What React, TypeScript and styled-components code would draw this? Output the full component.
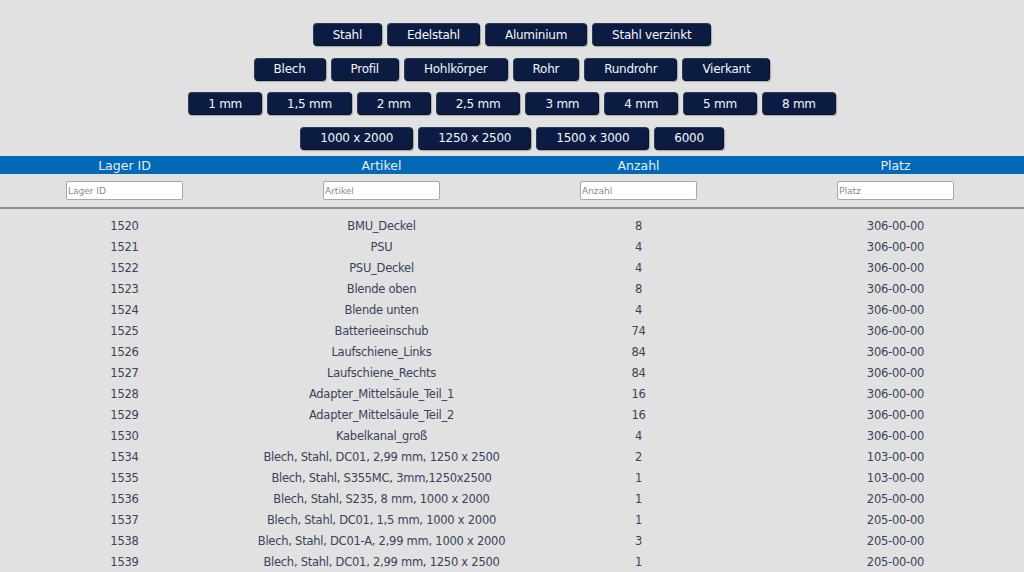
import React from "react";
import styled, { createGlobalStyle } from "styled-components";

const Global = createGlobalStyle`
  html, body { margin: 0; padding: 0; background: #e1e1e1; }
  body { font-family: "DejaVu Sans", Verdana, sans-serif; font-size: 12px; color: #38435e; }
`;

const Page = styled.div`
  padding-top: 23px;
`;

const Filters = styled.div`
  display: flex;
  flex-direction: column;
  align-items: center;
  gap: 11.5px;
`;

const ButtonRow = styled.div`
  display: flex;
  justify-content: center;
  gap: 5px;
`;

const FilterButton = styled.button`
  height: 23px;
  padding: 0 19px;
  border: 1px solid #2b3a5a;
  border-bottom-color: #0a1229;
  border-right-color: #0a1229;
  border-radius: 4px;
  background: #0c1b41;
  color: #f4f6fa;
  font-family: "DejaVu Sans", Verdana, sans-serif;
  font-size: 12px;
  letter-spacing: -0.25px;
  cursor: pointer;
  box-shadow: 1px 1px 1px rgba(0, 0, 0, 0.25);
`;

const Table = styled.div`
  margin-top: 6.5px;
  margin-left: -4px;
`;

const HeaderBar = styled.div`
  display: grid;
  grid-template-columns: repeat(4, 1fr);
  height: 18px;
  align-items: center;
  background: #0169b5;
  color: #e9eef6;
  font-size: 12.5px;
`;

const HeaderCell = styled.div`
  text-align: center;
`;

const SearchRow = styled.div`
  display: grid;
  grid-template-columns: repeat(4, 1fr);
  height: 33px;
  align-items: center;
  border-bottom: 2px solid #8e8e8e;
`;

const SearchCell = styled.div`
  display: flex;
  justify-content: center;
`;

const SearchInput = styled.input`
  width: 117px;
  height: 19px;
  box-sizing: border-box;
  padding: 0 1px;
  border: 1px solid #a8a8a8;
  border-radius: 2px;
  background: #fff;
  font-family: "DejaVu Sans", Verdana, sans-serif;
  font-size: 9px;
  color: #333;
  &::placeholder { color: #8a8a8a; }
`;

const Body = styled.div`
  padding-top: 6px;
`;

const Row = styled.div`
  display: grid;
  grid-template-columns: repeat(4, 1fr);
  height: 21px;
  align-items: center;
`;

const Cell = styled.div`
  text-align: center;
  white-space: nowrap;
  font-size: 11.5px;
  letter-spacing: -0.25px;
`;

const groups = [
  ["Stahl", "Edelstahl", "Aluminium", "Stahl verzinkt"],
  ["Blech", "Profil", "Hohlkörper", "Rohr", "Rundrohr", "Vierkant"],
  ["1 mm", "1,5 mm", "2 mm", "2,5 mm", "3 mm", "4 mm", "5 mm", "8 mm"],
  ["1000 x 2000", "1250 x 2500", "1500 x 3000", "6000"],
];

const columns = ["Lager ID", "Artikel", "Anzahl", "Platz"];

const rows: [string, string, string, string][] = [
  ["1520", "BMU_Deckel", "8", "306-00-00"],
  ["1521", "PSU", "4", "306-00-00"],
  ["1522", "PSU_Deckel", "4", "306-00-00"],
  ["1523", "Blende oben", "8", "306-00-00"],
  ["1524", "Blende unten", "4", "306-00-00"],
  ["1525", "Batterieeinschub", "74", "306-00-00"],
  ["1526", "Laufschiene_Links", "84", "306-00-00"],
  ["1527", "Laufschiene_Rechts", "84", "306-00-00"],
  ["1528", "Adapter_Mittelsäule_Teil_1", "16", "306-00-00"],
  ["1529", "Adapter_Mittelsäule_Teil_2", "16", "306-00-00"],
  ["1530", "Kabelkanal_groß", "4", "306-00-00"],
  ["1534", "Blech, Stahl, DC01, 2,99 mm, 1250 x 2500", "2", "103-00-00"],
  ["1535", "Blech, Stahl, S355MC, 3mm,1250x2500", "1", "103-00-00"],
  ["1536", "Blech, Stahl, S235, 8 mm, 1000 x 2000", "1", "205-00-00"],
  ["1537", "Blech, Stahl, DC01, 1,5 mm, 1000 x 2000", "1", "205-00-00"],
  ["1538", "Blech, Stahl, DC01-A, 2,99 mm, 1000 x 2000", "3", "205-00-00"],
  ["1539", "Blech, Stahl, DC01, 2,99 mm, 1250 x 2500", "1", "205-00-00"],
];

export default function App() {
  return (
    <Page>
      <Global />
      <Filters>
        {groups.map((g, i) => (
          <ButtonRow key={i}>
            {g.map((label) => (
              <FilterButton key={label}>{label}</FilterButton>
            ))}
          </ButtonRow>
        ))}
      </Filters>
      <Table>
        <HeaderBar>
          {columns.map((c) => (
            <HeaderCell key={c}>{c}</HeaderCell>
          ))}
        </HeaderBar>
        <SearchRow>
          {columns.map((c) => (
            <SearchCell key={c}>
              <SearchInput placeholder={c} />
            </SearchCell>
          ))}
        </SearchRow>
        <Body>
          {rows.map((r) => (
            <Row key={r[0]}>
              {r.map((v, j) => (
                <Cell key={j}>{v}</Cell>
              ))}
            </Row>
          ))}
        </Body>
      </Table>
    </Page>
  );
}
